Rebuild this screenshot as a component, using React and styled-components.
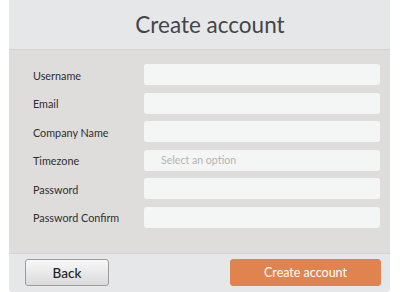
import React from "react";
import styled, { createGlobalStyle } from "styled-components";

const Global = createGlobalStyle`
  html, body { margin: 0; padding: 0; background: #ffffff; }
  body { font-family: Lato, "Open Sans", Arial, sans-serif; }
  * { box-sizing: border-box; }
`;

const Page = styled.div`
  width: 400px;
  height: 292px;
  padding-left: 9px;
  overflow: hidden;
`;

const Panel = styled.div`
  width: 381px;
  height: 292px;
  display: flex;
  flex-direction: column;
  border-radius: 0 0 4px 4px;
  overflow: hidden;
  background: #dfdddb;
`;

const Header = styled.div`
  height: 50px;
  flex: none;
  background: #e6e7e9;
  border-bottom: 1px solid #d2d3d6;
  display: flex;
  align-items: center;
  justify-content: center;
  padding: 0 0 1px 21px;
`;

const Title = styled.h1`
  margin: 0;
  font-family: Lato, sans-serif;
  font-weight: 400;
  font-size: 22.5px;
  color: #444547;
`;

const Body = styled.div`
  flex: 1;
  display: flex;
  flex-direction: column;
  gap: 7.5px;
  padding: 14px 10px 0 24px;
`;

const Row = styled.div`
  display: flex;
  align-items: center;
  height: 21px;
`;

const Label = styled.label`
  width: 111px;
  flex: none;
  font-family: Lato, sans-serif;
  font-size: 10.8px;
  color: #2e2e2e;
  padding-top: 1px;
`;

const Field = styled.div`
  flex: 1;
  height: 21px;
  background: #f4f6f5;
  border-radius: 3px;
  display: flex;
  align-items: center;
  padding-left: 17px;
  font-family: Lato, sans-serif;
  font-size: 10.6px;
  color: #b4b4b4;
`;

const Footer = styled.div`
  height: 39px;
  flex: none;
  background: #e6e7e9;
  border-top: 1px solid #d6d6d8;
  display: flex;
  align-items: flex-start;
  justify-content: space-between;
  padding: 5px 9px 0 16px;
`;

const Button = styled.button`
  height: 27px;
  width: ${(p) => p.$w}px;
  border-radius: 3px;
  font-family: Lato, sans-serif;
  font-size: ${(p) => (p.$primary ? "12.5px" : "13.5px")};
  font-weight: ${(p) => (p.$primary ? 400 : 500)};
  cursor: pointer;
  padding: 0;
  border: 1px solid ${(p) => (p.$primary ? "#e0834f" : "#9c9c9c")};
  background: ${(p) =>
    p.$primary ? "#e0834f" : "linear-gradient(#f8f8f8, #dadada)"};
  color: ${(p) => (p.$primary ? "#ffffff" : "#222222")};
`;

const fields = [
  ["Username", ""],
  ["Email", ""],
  ["Company Name", ""],
  ["Timezone", "Select an option"],
  ["Password", ""],
  ["Password Confirm", ""],
];

export default function App() {
  return (
    <Page>
      <Global />
      <Panel>
        <Header>
          <Title>Create account</Title>
        </Header>
        <Body>
          {fields.map(([label, placeholder]) => (
            <Row key={label}>
              <Label>{label}</Label>
              <Field>{placeholder}</Field>
            </Row>
          ))}
        </Body>
        <Footer>
          <Button $w={84}>Back</Button>
          <Button $w={151} $primary>
            Create account
          </Button>
        </Footer>
      </Panel>
    </Page>
  );
}
